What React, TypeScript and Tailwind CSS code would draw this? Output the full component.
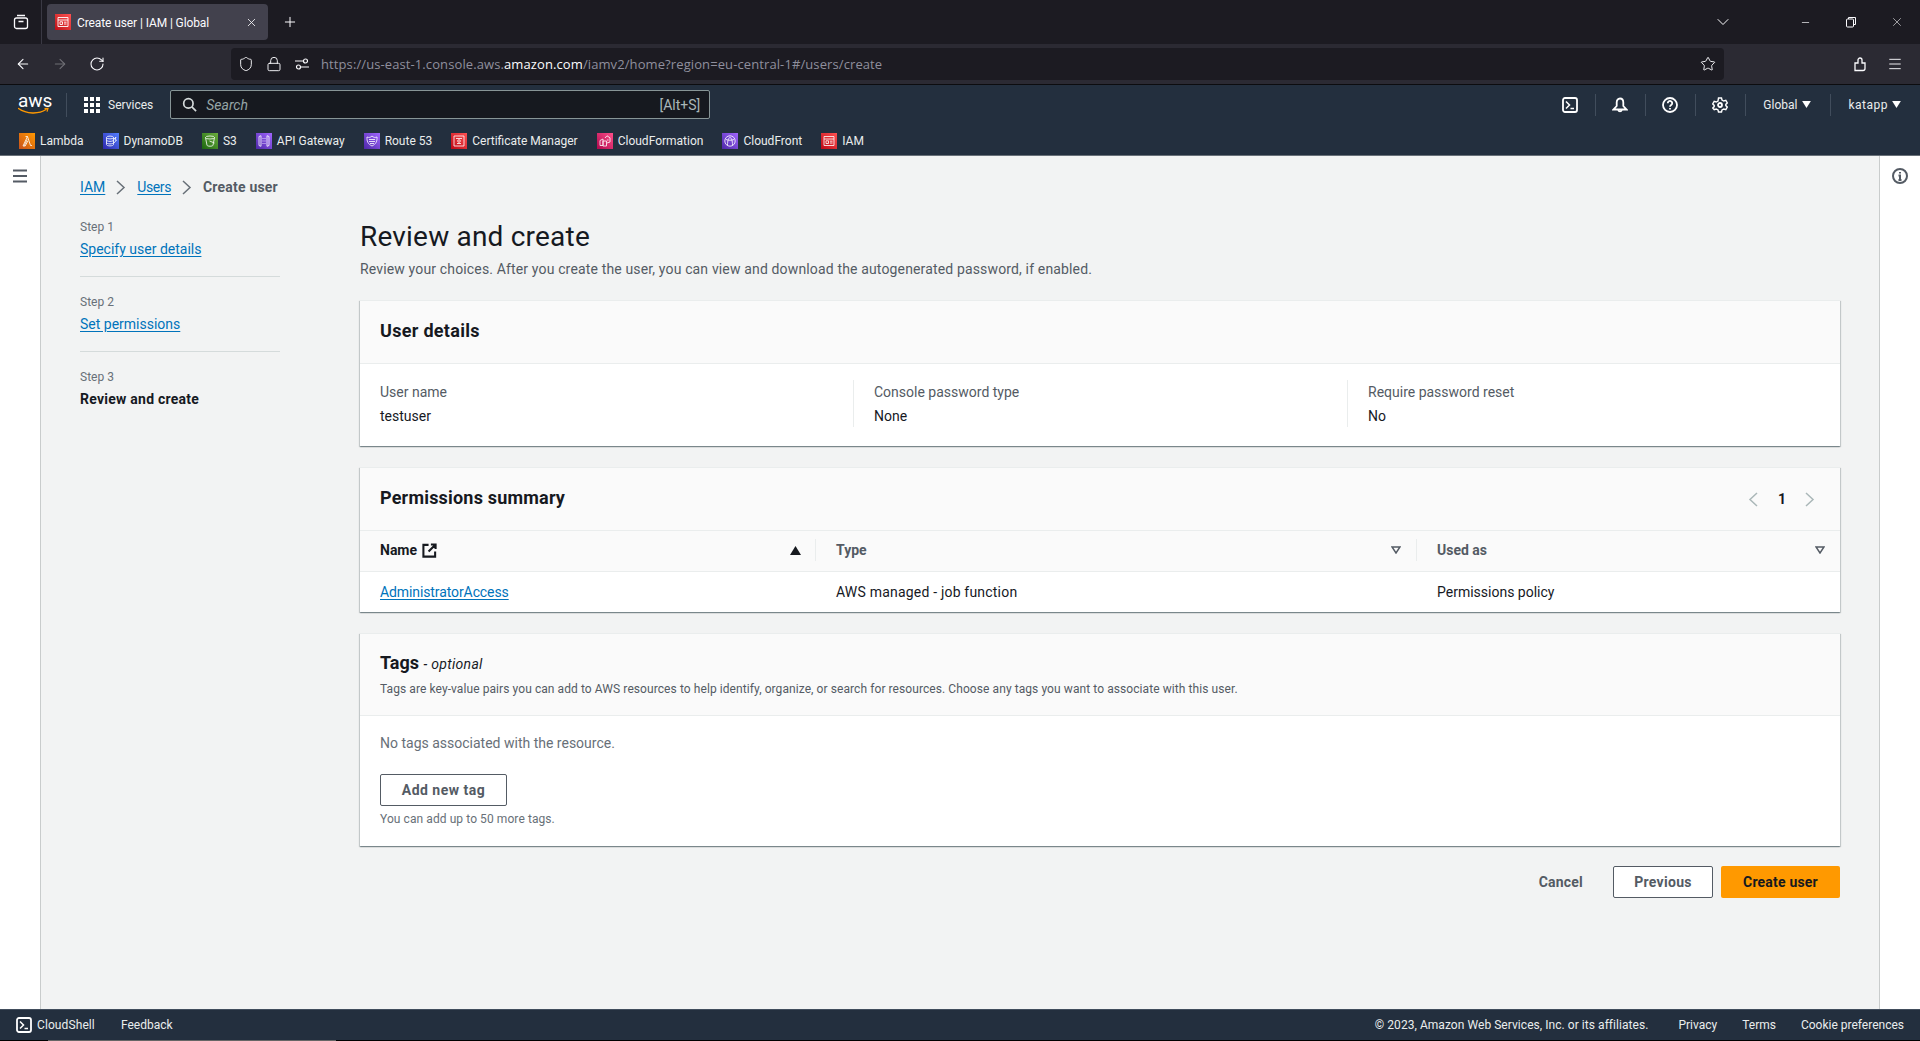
import { Plus, X, ArrowLeft, ArrowRight, RotateCw, Shield, Lock, Star, Menu, ChevronDown, Minus } from 'lucide-react';
import type { ReactNode } from 'react';

const favs: { name: string; from: string; to: string; icon: ReactNode }[] = [
  {
    name: 'Lambda',
    from: '#c8511b',
    to: '#ff9900',
    icon: <path d="M5 13l3.2-6.500M6.500 3.500h2L11.500 12.500h1.500M8.500 3.500L4 13h2.200l2.600-5" />,
  },
  {
    name: 'DynamoDB',
    from: '#2e27ad',
    to: '#527fff',
    icon: (
      <>
        <ellipse cx="7" cy="4.500" rx="3.500" ry="1.400" />
        <path d="M3.500 4.500v7c0 .8 1.600 1.400 3.500 1.400s3.500-.6 3.500-1.400v-7M3.500 7c0 .8 1.600 1.400 3.500 1.400S10.500 7.800 10.500 7M3.500 9.500c0 .8 1.600 1.400 3.500 1.400s3.500-.6 3.500-1.400M11 6l2-2-1 3h1.500L11 10" />
      </>
    ),
  },
  {
    name: 'S3',
    from: '#1b660f',
    to: '#6cae3e',
    icon: (
      <>
        <ellipse cx="8" cy="4.500" rx="4.500" ry="1.500" />
        <path d="M3.500 4.500L5 12.200c.2.7 1.400 1 3 1s2.800-.3 3-1l1.500-7.700M7.500 8l5 2" />
      </>
    ),
  },
  {
    name: 'API Gateway',
    from: '#4d27a8',
    to: '#a166ff',
    icon: <path d="M3 3.500l2-.8v10.600l-2-.8zM13 3.500l-2-.8v10.600l2-.8zM7 5v1M7 7.500v1M7 10v1M9 5v1M9 7.500v1M9 10v1" />,
  },
  {
    name: 'Route 53',
    from: '#4d27a8',
    to: '#a166ff',
    icon: (
      <>
        <path d="M3 4c2 .8 3.500.5 5-1 1.500 1.500 3 1.800 5 1 .3 4-.8 7-5 9-4.200-2-5.300-5-5-9z" />
        <path d="M5 6.500h6M5 8.500h6M6 10.500h4" />
      </>
    ),
  },
  {
    name: 'Certificate Manager',
    from: '#bd0816',
    to: '#ff5252',
    icon: (
      <>
        <path d="M3 3h10v10H3z" />
        <path d="M5 5.500h6M6 10.500h4" />
        <circle cx="8" cy="8" r="1.300" />
      </>
    ),
  },
  {
    name: 'CloudFormation',
    from: '#b0084d',
    to: '#ff4f8b',
    icon: <path d="M3 7.500l3-1.500v6.500H3zM6 8h3.500v5H6zM8 5l2-2.200 3 2V9l-3 1M10 7h1.500" />,
  },
  {
    name: 'CloudFront',
    from: '#4d27a8',
    to: '#a166ff',
    icon: (
      <>
        <circle cx="8" cy="8" r="5.200" />
        <path d="M5.500 12c0-4 1-7.500 2.500-7.500S10.500 8 10.500 12M4 6.500c2.500 1 5.500 1 8 0" />
      </>
    ),
  },
  {
    name: 'IAM',
    from: '#bd0816',
    to: '#ff5252',
    icon: (
      <>
        <path d="M3 3.500h10v9H3zM3 6h10" />
        <path d="M5 7.800h2.500v2.700H5zM9 8.200h2.500M9 10h2.500" />
      </>
    ),
  },
];

function Fav({ name, from, to, icon }: (typeof favs)[number]) {
  return (
    <div className="flex items-center gap-[5px]">
      <span className="w-4 h-4 flex-none" style={{ background: `linear-gradient(45deg, ${from}, ${to})` }}>
        <svg viewBox="0 0 16 16" className="w-4 h-4" fill="none" stroke="#fff" strokeWidth="0.9" opacity="0.9">
          {icon}
        </svg>
      </span>
      <span className="text-[12px] leading-4 text-[#eaeded]">{name}</span>
    </div>
  );
}

function NavDivider() {
  return <span className="block w-px h-[22px] bg-[#414d5c]" />;
}

function Caret() {
  return (
    <svg viewBox="0 0 10 8" className="w-[9px] h-[7px]" fill="#fff">
      <path d="M0 0h10L5 8z" />
    </svg>
  );
}

function Chev({ left, color }: { left?: boolean; color: string }) {
  return (
    <svg viewBox="0 0 10 15" className="w-[10px] h-[15px] flex-none" fill="none" stroke={color} strokeWidth="1.500">
      <path d={left ? 'M9 1L2 7.500 9 14' : 'M1 1l7 6.500L1 14'} />
    </svg>
  );
}

function TerminalIcon({ className }: { className?: string }) {
  return (
    <svg viewBox="0 0 16 16" className={className} fill="none" stroke="#fff" strokeWidth="1.800">
      <rect x="1" y="1" width="14" height="14" rx="2" />
      <path d="M4 4.500L7.500 8 4 11.500M8.500 11.500h3.500" strokeWidth="1.500" />
    </svg>
  );
}

function FilterCaret() {
  return (
    <svg viewBox="0 0 10 8" className="w-[10px] h-2" fill="none" stroke="#545b64" strokeWidth="1.500">
      <path d="M1 1h8L5 7z" />
    </svg>
  );
}

function Card({ children }: { children: ReactNode }) {
  return (
    <section className="bg-white border-t border-[#eaeded] shadow-[0_1px_1px_0_rgba(0,28,36,0.3),1px_1px_1px_0_rgba(0,28,36,0.15),-1px_1px_1px_0_rgba(0,28,36,0.15)]">
      {children}
    </section>
  );
}

function Step({ n, label, active }: { n: number; label: string; active?: boolean }) {
  return (
    <div>
      <div className="text-[12px] leading-4 text-[#687078]">Step {n}</div>
      {active ? (
        <div className="mt-1 text-[14px] leading-5 font-bold tracking-[0.25px] text-[#16191f]">{label}</div>
      ) : (
        <a className="mt-1 block text-[14px] leading-5 text-[#0073bb] underline underline-offset-2">{label}</a>
      )}
    </div>
  );
}

function Field({ label, value, first }: { label: string; value: string; first?: boolean }) {
  return (
    <div className={first ? 'h-[47px] pt-[2px] min-w-0' : 'h-[47px] pt-[2px] min-w-0 border-l border-[#eaeded] pl-5'}>
      <div className="text-[14px] leading-5 text-[#545b64]">{label}</div>
      <div className="mt-1 text-[14px] leading-5 text-[#16191f]">{value}</div>
    </div>
  );
}

export default function App() {
  return (
    <div className="h-[1041px] w-full overflow-hidden flex flex-col bg-[#f2f3f3] font-['Roboto',sans-serif]">
      {/* browser tab strip */}
      <div className="h-[44px] flex-none bg-[#1c1b22] flex items-center text-[#fbfbfe]">
        <div className="w-[42px] h-[44px] flex items-center justify-center border-r border-[#3a3944]">
          <svg viewBox="0 0 16 16" className="w-4 h-4" fill="none" stroke="#fbfbfe" strokeWidth="1.300">
            <rect x="1.500" y="4" width="13" height="10.500" rx="2" />
            <path d="M4 1.500h8M5.500 7.500h5" />
          </svg>
        </div>
        <div className="ml-[5px] w-[221px] h-9 rounded bg-[#42414d] flex items-center pl-2 pr-[10px]">
          <span className="w-4 h-4 flex-none bg-gradient-to-tr from-[#bd0816] to-[#ff5252]">
            <svg viewBox="0 0 16 16" className="w-4 h-4" fill="none" stroke="#fff" strokeWidth="0.900">
              <path d="M3 3.500h10v9H3zM3 6h10M5 7.800h2.500v2.700H5zM9 8.200h2.500M9 10h2.500" />
            </svg>
          </span>
          <span className="ml-[6px] pt-px flex-1 text-[12px] tracking-[-0.1px] text-[#fbfbfe]">Create user | IAM | Global</span>
          <X className="w-[13px] h-[13px]" strokeWidth={1.500} />
        </div>
        <Plus className="ml-[14px] w-4 h-4" strokeWidth={1.500} />
        <ChevronDown className="ml-auto mr-[67px] w-5 h-5" strokeWidth={1.200} />
        <Minus className="mr-[34px] w-[11px] h-[11px]" strokeWidth={1.500} />
        <svg viewBox="0 0 12 12" className="mr-[33px] w-3 h-3" fill="none" stroke="#fbfbfe" strokeWidth="1">
          <rect x="1.500" y="3" width="7" height="8" rx="1" />
          <path d="M3.500 3V1.500h7v7H8.500" />
        </svg>
        <X className="mr-[16px] w-[14px] h-[14px]" strokeWidth={1} />
      </div>

      {/* browser toolbar */}
      <div className="h-[41px] flex-none bg-[#2b2a33] flex items-start pt-1 border-b border-[#0c0c0f]">
        <div className="flex items-center h-8 text-[#fbfbfe]">
          <ArrowLeft className="ml-[15px] w-4 h-4" strokeWidth={1.600} />
          <ArrowRight className="ml-[21px] w-4 h-4 text-[#6f6e75]" strokeWidth={1.600} />
          <RotateCw className="ml-[21px] w-4 h-4" strokeWidth={1.600} />
        </div>
        <div className="ml-[126px] w-[1493px] h-8 rounded bg-[#1c1b22] flex items-center text-[#fbfbfe]">
          <Shield className="ml-[7px] w-4 h-4" strokeWidth={1.400} />
          <Lock className="ml-[12px] w-4 h-4" strokeWidth={1.400} />
          <svg viewBox="0 0 16 16" className="ml-[12px] w-4 h-4" fill="none" stroke="#fbfbfe" strokeWidth="1.200">
            <circle cx="11.500" cy="5" r="2" />
            <circle cx="4.500" cy="11" r="2" />
            <path d="M1 5h8M7 11h8" />
          </svg>
          <span className="ml-[11px] mt-[2px] text-[13px] tracking-[0.1px] text-[#8f8f9d] font-['Open_Sans',sans-serif]">
            https://us-east-1.console.aws.<span className="text-[#fbfbfe]">amazon.com</span>/iamv2/home?region=eu-central-1#/users/create
          </span>
          <Star className="ml-auto mr-[8px] w-4 h-4" strokeWidth={1.400} />
        </div>
        <div className="flex items-center h-8 text-[#fbfbfe]">
          <svg viewBox="0 0 16 16" className="ml-[128px] w-4 h-4" fill="none" stroke="#fbfbfe" strokeWidth="1.300">
            <path d="M3 14.500V7h3V4a2 2 0 014 0v3h3v5.500a2 2 0 01-2 2z" />
          </svg>
          <Menu className="ml-[19px] w-4 h-4" strokeWidth={1.400} />
        </div>
      </div>

      {/* aws nav */}
      <header className="h-[71px] flex-none bg-[#232f3e] border-b border-[#687078] flex flex-col">
        <div className="mt-[5px] h-[29px] flex items-center">
          <div className="ml-[18px] w-[31px] flex-none flex flex-col">
            <span className="text-[19px] leading-[13px] text-white">aws</span>
            <svg viewBox="0 0 31 8" className="w-[31px] h-2" fill="none">
              <path d="M0.500 1.500c8 5.500 20 6 27.500 1" stroke="#ff9900" strokeWidth="1.500" strokeLinecap="round" />
              <path d="M26.500 1.500l3.500-.2-1 3.400" stroke="#ff9900" strokeWidth="1.200" />
            </svg>
          </div>
          <span className="ml-[17px] w-px h-[24px] bg-[#414d5c]" />
          <div className="ml-[17px] grid grid-cols-3 gap-[2px] w-4 h-4 flex-none">
            {Array.from({ length: 9 }).map((_, i) => (
              <span key={i} className="bg-white" />
            ))}
          </div>
          <span className="ml-2 pt-px text-[12px] text-[#eaeded]">Services</span>
          <div className="ml-[17px] w-[540px] h-[29px] bg-[#16191f] border border-[#879596] rounded-[2px] flex items-center pl-[11px] pr-[9px]">
            <svg viewBox="0 0 16 16" className="w-[15px] h-[15px]" fill="none" stroke="#d5dbdb" strokeWidth="1.800">
              <circle cx="6.800" cy="6.800" r="5" />
              <path d="M10.500 10.500L15 15" />
            </svg>
            <span className="ml-[9px] pt-px text-[14px] italic text-[#95a5a6]">Search</span>
            <span className="ml-auto pt-px text-[14px] text-[#aab7b8]">[Alt+S]</span>
          </div>
          <div className="ml-auto flex items-center">
            <TerminalIcon className="w-4 h-4" />
            <span className="ml-[17px]"><NavDivider /></span>
            <svg viewBox="0 0 16 16" className="ml-[16px] w-4 h-4" fill="none" stroke="#fff" strokeWidth="1.800">
              <path d="M8 1.500c-2 0-3.300 1.800-3.300 4V9L1.500 12.500h13L11.300 9V5.500C11.300 3.300 10 1.500 8 1.500z" />
              <path d="M6.200 13a1.900 1.900 0 003.600 0" />
            </svg>
            <span className="ml-[17px]"><NavDivider /></span>
            <svg viewBox="0 0 16 16" className="ml-[16px] w-4 h-4" fill="none" stroke="#fff" strokeWidth="1.800">
              <circle cx="8" cy="8" r="7" />
              <path d="M5.800 6.200a2.200 2.200 0 114 1.200c-.7.700-1.800 1-1.800 2.300M8 11v1.500" />
            </svg>
            <span className="ml-[17px]"><NavDivider /></span>
            <svg viewBox="0 0 16 16" className="ml-[16px] w-4 h-4" fill="none" stroke="#fff" strokeWidth="1.800">
              <path d="M6.500 1h3l.5 2 1.800 1 2-.6 1.500 2.600-1.500 1.400v1.200l1.500 1.400-1.500 2.600-2-.6-1.800 1-.5 2h-3l-.5-2-1.800-1-2 .6L.7 11l1.500-1.400V8.400L.7 7l1.500-2.600 2 .6 1.800-1z" strokeWidth="1.400" />
              <circle cx="8" cy="8" r="2" />
            </svg>
            <span className="ml-[17px]"><NavDivider /></span>
            <span className="ml-[17px] pt-px text-[12px] text-[#eaeded]">Global</span>
            <span className="ml-[5px]"><Caret /></span>
            <span className="ml-[19px]"><NavDivider /></span>
            <span className="ml-[17px] pt-px text-[12px] tracking-[0.5px] text-[#eaeded]">katapp</span>
            <span className="ml-[4px] mr-[19px]"><Caret /></span>
          </div>
        </div>
        <div className="mt-[14px] pl-[19px] flex items-center gap-[19px] h-4">
          {favs.map((f) => (
            <Fav key={f.name} {...f} />
          ))}
        </div>
      </header>

      {/* page */}
      <div className="flex-1 min-h-0 flex">
        <aside className="w-[41px] flex-none bg-white border-r border-[#c9cccc] flex justify-center pt-[12px]">
          <svg viewBox="0 0 16 16" className="w-4 h-4" fill="none" stroke="#545b64" strokeWidth="2">
            <path d="M1 2.500h14M1 8h14M1 13.500h14" />
          </svg>
        </aside>

        <main className="flex-1 min-w-0 px-[39px] pt-[20px]">
          <nav className="flex items-center h-[22px] text-[14px]">
            <a className="text-[#0073bb] underline underline-offset-2">IAM</a>
            <span className="mx-[11px]"><Chev color="#687078" /></span>
            <a className="text-[#0073bb] underline underline-offset-2 tracking-[-0.4px]">Users</a>
            <span className="mx-[11px]"><Chev color="#687078" /></span>
            <span className="font-bold tracking-[0.2px] text-[#545b64]">Create user</span>
          </nav>

          <div className="flex gap-[80px] mt-[21px]">
            <ol className="w-[200px] flex-none">
              <li className="pb-[17px] border-b border-[#d5dbdb]"><Step n={1} label="Specify user details" /></li>
              <li className="pt-[17px] pb-[17px] border-b border-[#d5dbdb]"><Step n={2} label="Set permissions" /></li>
              <li className="pt-[17px]"><Step n={3} label="Review and create" active /></li>
            </ol>

            <div className="flex-1 min-w-0">
              <h1 className="text-[28px] leading-9 tracking-[0.2px] text-[#16191f]">Review and create</h1>
              <p className="mt-[4px] text-[14px] leading-5 tracking-[0.15px] text-[#545b64]">
                Review your choices. After you create the user, you can view and download the autogenerated password, if enabled.
              </p>

              <div className="mt-[21px] flex flex-col gap-[21px]">
                <Card>
                  <div className="h-[63px] bg-[#fafafa] border-b border-[#eaeded] flex items-center px-5 pb-[3px]">
                    <h2 className="text-[18px] font-bold tracking-[0.3px] text-[#16191f]">User details</h2>
                  </div>
                  <div className="grid grid-cols-[473px_494px_1fr] h-[82px] pt-4 pl-5 pr-5">
                    <Field first label="User name" value="testuser" />
                    <Field label="Console password type" value="None" />
                    <Field label="Require password reset" value="No" />
                  </div>
                </Card>

                <Card>
                  <div className="h-[63px] bg-[#fafafa] border-b border-[#eaeded] flex items-center justify-between pl-5 pr-[25px] pb-[3px]">
                    <h2 className="text-[18px] font-bold tracking-[0.2px] text-[#16191f]">Permissions summary</h2>
                    <div className="flex items-center pt-[3px] text-[#aab7b8]">
                      <Chev left color="#aab7b8" />
                      <span className="ml-[20px] mr-[19px] w-[8px] text-center text-[14px] font-bold text-[#16191f]">1</span>
                      <Chev color="#aab7b8" />
                    </div>
                  </div>
                  <div className="grid grid-cols-[456px_601px_1fr] h-[41px] pb-[2px] bg-[#fafafa] border-b border-[#eaeded] items-center">
                    <div className="h-[22px] flex items-center pl-5 pr-[14px] border-r border-[#eaeded]">
                      <span className="text-[14px] font-bold text-[#16191f]">Name</span>
                      <svg viewBox="0 0 16 16" className="ml-[5px] w-[15px] h-[15px]" fill="none" stroke="#16191f" strokeWidth="2.200">
                        <path d="M7 2H1.500v12.500H14V9M9.500 1.500H14.500V6.500M14.500 1.500L7 9" />
                      </svg>
                      <svg viewBox="0 0 10 8" className="ml-auto w-[11px] h-[9px]" fill="#16191f">
                        <path d="M5 0l5 8H0z" />
                      </svg>
                    </div>
                    <div className="h-[22px] flex items-center pl-5 pr-[15px] border-r border-[#eaeded]">
                      <span className="text-[14px] font-bold text-[#545b64]">Type</span>
                      <span className="ml-auto flex"><FilterCaret /></span>
                    </div>
                    <div className="h-[22px] flex items-center pl-5 pr-[15px]">
                      <span className="text-[14px] font-bold text-[#545b64]">Used as</span>
                      <span className="ml-auto flex"><FilterCaret /></span>
                    </div>
                  </div>
                  <div className="grid grid-cols-[456px_601px_1fr] h-[40px] items-center text-[14px] text-[#16191f]">
                    <span className="pl-5"><a className="tracking-[-0.1px] text-[#0073bb] underline underline-offset-2">AdministratorAccess</a></span>
                    <span className="pl-5 tracking-[0.2px]">AWS managed - job function</span>
                    <span className="pl-5">Permissions policy</span>
                  </div>
                </Card>

                <Card>
                  <div className="h-[82px] bg-[#fafafa] border-b border-[#eaeded] px-5 pt-[17px]">
                    <h2 className="text-[18px] leading-[24px] font-bold text-[#16191f]">
                      Tags <span className="text-[14px] font-normal italic tracking-[0.3px]"> - optional</span>
                    </h2>
                    <p className="mt-[5px] text-[12px] leading-4 tracking-[0.08px] text-[#545b64]">
                      Tags are key-value pairs you can add to AWS resources to help identify, organize, or search for resources. Choose any tags you want to associate with this user.
                    </p>
                  </div>
                  <div className="h-[130px] px-5 pt-[17px]">
                    <p className="text-[14px] leading-5 text-[#687078]">No tags associated with the resource.</p>
                    <button className="mt-[21px] w-[127px] h-[32px] bg-white border border-[#545b64] rounded-[2px] text-[14px] font-bold tracking-[0.5px] text-[#545b64]">Add new tag</button>
                    <p className="mt-[5px] text-[12px] leading-4 tracking-[0.08px] text-[#687078]">You can add up to 50 more tags.</p>
                  </div>
                </Card>
              </div>

              <div className="mt-[20px] flex items-center justify-end">
                <span className="text-[14px] font-bold tracking-[0.2px] text-[#545b64]">Cancel</span>
                <button className="ml-[30px] w-[100px] h-8 bg-white border border-[#545b64] rounded-[2px] text-[14px] font-bold tracking-[0.3px] text-[#545b64]">Previous</button>
                <button className="ml-2 w-[119px] h-8 bg-[#ff9900] rounded-[2px] text-[14px] font-bold tracking-[0.2px] text-[#16191f]">Create user</button>
              </div>
            </div>
          </div>
        </main>

        <aside className="w-[41px] flex-none bg-white border-l border-[#c9cccc] flex justify-center pt-[12px]">
          <svg viewBox="0 0 16 16" className="w-4 h-4" fill="none" stroke="#545b64" strokeWidth="2">
            <circle cx="8" cy="8" r="7" />
            <path d="M6.500 7.500H8V12M6.500 12h3M8 4v1.500" />
          </svg>
        </aside>
      </div>

      {/* footer */}
      <footer className="relative h-[32px] flex-none bg-[#232f3e] border-t border-[#414d5c] border-b border-b-black flex items-center text-[12px] text-[#eaeded]">
        <TerminalIcon className="ml-4 w-4 h-4" />
        <span className="ml-[5px] tracking-[0.1px]">CloudShell</span>
        <span className="ml-[26px]">Feedback</span>
        <span className="ml-auto tracking-[0.05px]">© 2023, Amazon Web Services, Inc. or its affiliates.</span>
        <span className="ml-[30px]">Privacy</span>
        <span className="ml-[25px]">Terms</span>
        <span className="ml-[25px] mr-4">Cookie preferences</span>
        <span className="absolute left-[48px] -bottom-px w-[288px] h-px bg-[#666]" />
      </footer>
    </div>
  );
}
